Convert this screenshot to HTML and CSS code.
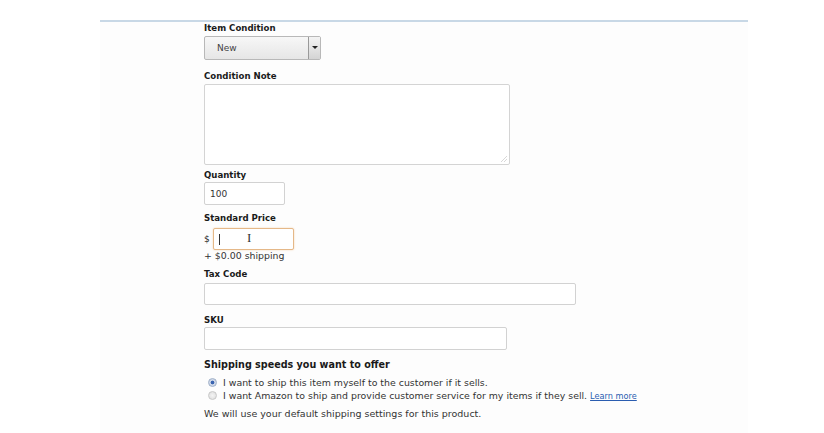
FILE: index.html
```html
<!DOCTYPE html>
<html lang="en">
<head>
    <meta charset="UTF-8">
    <title>Offer Details</title>
    <link rel="stylesheet" href="styles.css">
</head>
<body>
    <div class="offer-panel">
        <form class="offer-form">
            <div class="field field-condition">
                <label class="field-label">Item Condition</label>
                <div class="fake-select">
                    <span class="fake-select-value">New</span>
                    <span class="fake-select-arrow"></span>
                </div>
            </div>

            <div class="field field-note">
                <label class="field-label">Condition Note</label>
                <div class="note-box"><span class="grip"></span></div>
            </div>

            <div class="field field-qty">
                <label class="field-label">Quantity</label>
                <div class="text-box qty-box">100</div>
            </div>

            <div class="field field-price">
                <label class="field-label">Standard Price</label>
                <div class="price-row">
                    <span class="currency">$</span>
                    <div class="text-box price-box">
                        <span class="caret"></span>
                        <span class="ibeam">I</span>
                    </div>
                </div>
                <div class="shipping-note">+ $0.00 shipping</div>
            </div>

            <div class="field field-tax">
                <label class="field-label">Tax Code</label>
                <div class="text-box tax-box"></div>
            </div>

            <div class="field field-sku">
                <label class="field-label">SKU</label>
                <div class="text-box sku-box"></div>
            </div>

            <div class="field field-shipping">
                <div class="section-label">Shipping speeds you want to offer</div>
                <div class="radio-row">
                    <span class="radio checked"></span>
                    <span>I want to ship this item myself to the customer if it sells.</span>
                </div>
                <div class="radio-row">
                    <span class="radio"></span>
                    <span>I want Amazon to ship and provide customer service for my items if they sell. <a class="learn-more" href="#">Learn more</a></span>
                </div>
                <p class="default-note">We will use your default shipping settings for this product.</p>
            </div>
        </form>
    </div>
</body>
</html>
```

FILE: styles.css
```css
body {
    margin: 0;
    background: #fff;
    font-family: 'DejaVu Sans', Verdana, sans-serif;
    color: #222;
}

.offer-panel {
    margin: 20px 0 0 100px;
    width: 648px;
    height: 413px;
    border-top: 2px solid #c8d8e6;
    background: #fdfdfd;
    box-sizing: border-box;
}

.offer-form {
    padding: 1px 0 0 104px;
    display: flex;
    flex-direction: column;
}

.field-label {
    display: block;
    font-size: 8.6px;
    font-weight: bold;
    color: #1a1a1a;
    line-height: 11px;
}

.fake-select {
    margin-top: 2px;
    width: 117px;
    height: 24px;
    box-sizing: border-box;
    border: 1px solid #b8b8b8;
    border-radius: 2px;
    background: linear-gradient(#f7f7f7, #e6e6e6);
    display: flex;
    align-items: center;
    justify-content: space-between;
}

.fake-select-value {
    padding-left: 12px;
    font-size: 9px;
    color: #444;
}

.fake-select-arrow {
    width: 11px;
    height: 22px;
    border-left: 1px solid #999;
    background: linear-gradient(#f4f4f4, #d4d4d4);
    position: relative;
}

.fake-select-arrow::after {
    content: "";
    position: absolute;
    left: 3px;
    top: 9px;
    border-left: 3px solid transparent;
    border-right: 3px solid transparent;
    border-top: 3px solid #222;
}

.field-note {
    margin-top: 11px;
}

.note-box {
    margin-top: 2px;
    width: 306px;
    height: 81px;
    box-sizing: border-box;
    border: 1px solid #d4d4d4;
    border-radius: 2px;
    background: #fff;
    position: relative;
}

.grip {
    position: absolute;
    right: 2px;
    bottom: 2px;
    width: 6px;
    height: 6px;
    background: linear-gradient(135deg, transparent 45%, #d8d8d8 45%, #d8d8d8 55%, transparent 55%, transparent 70%, #d8d8d8 70%, #d8d8d8 80%, transparent 80%);
}

.field-qty {
    margin-top: 5px;
}

.text-box {
    margin-top: 1px;
    height: 23px;
    box-sizing: border-box;
    border: 1px solid #d2d2d2;
    border-radius: 2px;
    background: #fff;
    font-size: 9px;
    color: #333;
    display: flex;
    align-items: center;
}

.qty-box {
    width: 81px;
    padding-left: 5px;
}

.field-price {
    margin-top: 8px;
}

.price-row {
    display: flex;
    align-items: center;
    margin-top: 4px;
}

.currency {
    font-size: 9px;
    width: 9px;
}

.price-box {
    margin-top: 0;
    width: 81px;
    height: 22px;
    border: 1px solid #e5b888;
    box-shadow: 0 0 2px #f3d3b0;
    position: relative;
}

.caret {
    margin-left: 5px;
    width: 1px;
    height: 11px;
    background: #333;
}

.ibeam {
    position: absolute;
    left: 33px;
    top: 1px;
    font-family: 'Liberation Serif', serif;
    font-size: 13px;
    color: #333;
}

.shipping-note {
    font-size: 9.4px;
    color: #333;
    margin-top: 0;
}

.field-tax {
    margin-top: 8px;
}

.tax-box {
    width: 372px;
    height: 22px;
    margin-top: 3px;
}

.field-sku {
    margin-top: 10px;
}

.sku-box {
    width: 303px;
    height: 23px;
    margin-top: 1px;
}

.field-shipping {
    margin-top: 9px;
}

.section-label {
    font-size: 9.6px;
    font-weight: bold;
    color: #1a1a1a;
    line-height: 12px;
    margin-bottom: 5px;
}

.radio-row {
    display: flex;
    align-items: center;
    font-size: 9.4px;
    color: #333;
    height: 13px;
    padding-left: 4px;
}

.radio {
    width: 7px;
    height: 7px;
    border-radius: 50%;
    border: 1px solid #c8c8c8;
    background: radial-gradient(#f4f4f4, #dcdcdc);
    margin-right: 6px;
    flex-shrink: 0;
}

.radio.checked {
    background: radial-gradient(#3a64b0 30%, #cfd8e8 45%);
    border-color: #9fb0c8;
}

.learn-more {
    font-size: 8.2px;
    color: #2a5db0;
}

.default-note {
    margin: 6px 0 0;
    font-size: 9.5px;
    color: #333;
}
```
